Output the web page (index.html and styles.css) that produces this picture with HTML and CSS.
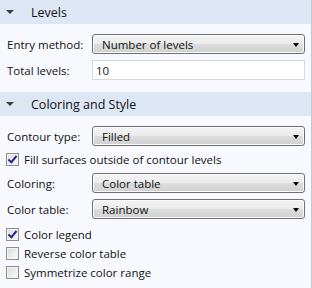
FILE: index.html
```html
<!DOCTYPE html>
<html lang="en">
<head>
    <meta charset="UTF-8">
    <title>Contour settings</title>
    <link rel="stylesheet" href="styles.css">
</head>
<body>
    <div class="panel">
        <div class="section-header"><span class="caret"></span>Levels</div>
        <div class="section-body levels">
            <div class="row">
                <span class="label">Entry method:</span>
                <div class="select">Number of levels<span class="arrow"></span></div>
            </div>
            <div class="row">
                <span class="label">Total levels:</span>
                <div class="text-input">10</div>
            </div>
        </div>

        <div class="section-header"><span class="caret"></span>Coloring and Style</div>
        <div class="section-body">
            <div class="row">
                <span class="label">Contour type:</span>
                <div class="select">Filled<span class="arrow"></span></div>
            </div>
            <div class="check"><span class="box checked"></span>Fill surfaces outside of contour levels</div>
            <div class="row">
                <span class="label">Coloring:</span>
                <div class="select">Color table<span class="arrow"></span></div>
            </div>
            <div class="row">
                <span class="label">Color table:</span>
                <div class="select">Rainbow<span class="arrow"></span></div>
            </div>
            <div class="check-list">
                <div class="check"><span class="box checked"></span>Color legend</div>
                <div class="check"><span class="box"></span>Reverse color table</div>
                <div class="check"><span class="box"></span>Symmetrize color range</div>
            </div>
        </div>
    </div>
</body>
</html>
```

FILE: styles.css
```css
body {
    margin: 0;
    font-family: "Open Sans", "Noto Sans", sans-serif;
    font-size: 11.5px;
    color: #111;
}
.panel {
    width: 311px;
    height: 288px;
    background-color: #f7f9fe;
    border-right: 1px solid #c3cad4;
    overflow: hidden;
}
.section-header {
    height: 24px;
    background-color: #dce6f4;
    display: flex;
    align-items: center;
    font-size: 12.5px;
}
.caret {
    width: 0;
    height: 0;
    margin: 0 17px 0 6px;
    border-left: 4px solid transparent;
    border-right: 4px solid transparent;
    border-top: 4px solid #3c3c3c;
}
.section-body {
    padding: 10px 6px 6px 6px;
    display: flex;
    flex-direction: column;
    gap: 6px;
}
.section-body.levels {
    padding-bottom: 12px;
}
.row {
    display: flex;
    align-items: center;
    height: 20px;
}
.label {
    width: 85px;
    padding-left: 1px;
    white-space: nowrap;
}
.select {
    flex: 1;
    height: 18px;
    border: 1px solid #707070;
    border-radius: 3px;
    background: linear-gradient(#f3f3f3 0%, #ebebeb 50%, #dddddd 50%, #d0d0d0 100%);
    box-shadow: inset 0 0 0 1px #fafafa;
    display: flex;
    align-items: center;
    padding-left: 9px;
    position: relative;
}
.arrow {
    position: absolute;
    right: 5px;
    top: 8px;
    width: 0;
    height: 0;
    border-left: 3.5px solid transparent;
    border-right: 3.5px solid transparent;
    border-top: 4px solid #000;
}
.text-input {
    flex: 1;
    height: 18px;
    border: 1px solid #d6dbe2;
    background-color: #fff;
    display: flex;
    align-items: center;
    padding-left: 3px;
}
.check {
    display: flex;
    align-items: center;
    height: 15px;
    white-space: nowrap;
}
.check-list {
    display: flex;
    flex-direction: column;
}
.check-list .check {
    height: 19px;
}
.box {
    width: 11px;
    height: 11px;
    border: 1px solid #8e8f8f;
    background: linear-gradient(135deg, #dcdcdc, #fbfbfb);
    box-shadow: inset 0 0 0 1px #f4f4f4;
    margin-right: 5px;
    position: relative;
}
.box.checked::after {
    content: "";
    position: absolute;
    left: 3px;
    top: 0px;
    width: 3px;
    height: 7px;
    border-right: 2px solid #21298f;
    border-bottom: 2px solid #21298f;
    transform: rotate(40deg);
}
```
